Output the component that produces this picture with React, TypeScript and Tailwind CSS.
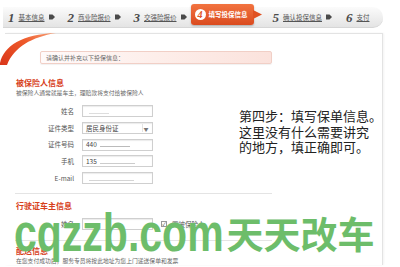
import React from "react";

const steps = [
  { n: "1", label: "基本信息" },
  { n: "2", label: "商业险报价" },
  { n: "3", label: "交强险报价" },
];

function StepArrow() {
  return (
    <svg width="6" height="6" viewBox="0 0 6 6" className="shrink-0">
      <path d="M0 0.5h3.5L6 3 3.5 5.5H0z" fill="#4a4a4a" />
    </svg>
  );
}

function Step({ n, label, arrow = true }: { n: string; label: string; arrow?: boolean }) {
  return (
    <div className="flex items-center">
      <span className="font-['Liberation_Serif',serif] text-[13px] font-bold italic leading-none text-[#4b4b4b]">
        {n}
      </span>
      <span className="ml-[4px] text-[6.5px] leading-none text-[#555] underline">{label}</span>
      {arrow ? (
        <span className="ml-[4px]">
          <StepArrow />
        </span>
      ) : null}
    </div>
  );
}

function Field({ label, value, smudge, select }: { label: string; value?: string; smudge?: string; select?: boolean }) {
  return (
    <div className="flex h-[16.7px] items-center">
      <span className="w-[70px] pr-px text-right text-[6.5px] leading-none text-[#555]">{label}</span>
      <div className="ml-[7px] flex h-[12px] w-[71px] items-center border border-[#cfcfcf] bg-white px-[3px] shadow-[inset_0_1px_1px_rgba(0,0,0,0.08)]">
        {value ? <span className="text-[6.5px] leading-none text-[#444]">{value}</span> : null}
        {smudge ? <span className={`ml-[3px] mt-[4px] h-px bg-[#bbb] ${smudge}`} /> : null}
        {select ? (
          <span className="ml-auto flex h-[8px] w-[7px] items-center justify-center border-l border-[#e3e3e3] text-[5px] leading-none text-[#777]">
            ▼
          </span>
        ) : null}
      </div>
    </div>
  );
}

export default function App() {
  return (
    <div className="relative h-[267px] w-[400px] overflow-hidden bg-white font-['Noto_Sans_CJK_SC','Noto_Sans',sans-serif]">
      {/* step bar */}
      <div className="pt-[7px] pl-[3px]">
        <div className="flex h-[21px] w-[380px] items-center rounded-r-[10px] border-b border-[#d6d6d6] bg-gradient-to-b from-[#fbfbfb] to-[#e4e4e4] pl-[5px]">
          <div className="flex items-center gap-[13px]">
            {steps.map((s) => (
              <Step key={s.n} n={s.n} label={s.label} />
            ))}
          </div>
          <div className="ml-[4px] -mt-[3px] flex items-center self-start">
            <div className="flex h-[21px] w-[63px] items-center rounded-[3px] bg-gradient-to-b from-[#f2733f] to-[#da4a1e] pl-[4px] shadow-[0_1px_2px_rgba(0,0,0,0.25)]">
              <span className="flex h-[11px] w-[11px] items-center justify-center rounded-full bg-white font-['Liberation_Serif',serif] text-[10px] font-bold italic leading-none text-[#e2562a]">
                4
              </span>
              <span className="ml-[3px] text-[6.5px] font-bold leading-none text-white">填写投保信息</span>
            </div>
            <svg width="9" height="21" viewBox="0 0 9 21" className="-ml-px">
              <path d="M0 6L9 10.5 0 15z" fill="#e05122" />
            </svg>
          </div>
          <div className="ml-[11px] flex items-center gap-[14px]">
            <Step n="5" label="确认投保信息" />
            <Step n="6" label="支付" arrow={false} />
          </div>
        </div>
      </div>

      {/* swoosh */}
      <svg className="absolute left-0 top-[31px]" width="60" height="34" viewBox="0 0 60 34">
        <defs>
          <linearGradient id="sw" x1="0" y1="1" x2="1" y2="0">
            <stop offset="0" stopColor="#d9361a" />
            <stop offset="0.6" stopColor="#ee5a2a" />
            <stop offset="1" stopColor="#f7a077" />
          </linearGradient>
        </defs>
        <path d="M0 32C4 15 22 3 56 2 32 6 14 16 7 34H0z" fill="url(#sw)" />
      </svg>

      {/* panel */}
      <div className="ml-[5px] mt-[5px] w-[378px] border-t border-r border-[#e3e3e3] shadow-[1px_0_2px_rgba(0,0,0,0.05)]">
        <div className="ml-[35px] mt-[17px] flex h-[13px] w-[232px] items-center rounded-[2px] border border-[#f1cfc6] bg-gradient-to-r from-[#fffafa] via-[#fdeeea] to-[#fbe2dc] pl-[5px] shadow-[0_1px_1px_rgba(0,0,0,0.06)]">
          <span className="text-[6px] leading-none text-[#666]">请确认并补充以下投保信息：</span>
        </div>

        <div className="pl-[11px] mt-[14px] text-[8px] font-bold leading-[10px] text-[#d7411c]">被保险人信息</div>
        <div className="pl-[11px] mt-px text-[5.8px] leading-[8px] text-[#666]">
          被保险人通常就是车主，理赔款将支付给被保险人
        </div>

        <div className="mt-[6px] flex flex-col">
          <Field label="姓名" smudge="w-[20px] bg-[#ddd]" />
          <Field label="证件类型" value="居民身份证" select />
          <Field label="证件号码" value="440" smudge="w-[30px]" />
          <Field label="手机" value="135" smudge="w-[35px] bg-[#ccc]" />
          <Field label="E-mail" smudge="w-[45px] bg-[#d5d5d5]" />
        </div>

        <div className="ml-[10px] mt-[7px] w-[257px] border-t border-[#e4e4e4]" />

        <div className="pl-[11px] mt-[7px] text-[8px] font-bold leading-[10px] text-[#d7411c]">行驶证车主信息</div>
        <div className="mt-[4px] flex items-center">
          <Field label="姓名" />
          <span className="ml-[8px] flex h-[6px] w-[6px] items-center justify-center border border-[#999] bg-white text-[5px] leading-none text-[#333]">
            ✓
          </span>
          <span className="ml-[5px] text-[6.5px] leading-none text-[#555]">同被保险人</span>
        </div>

        <div className="ml-[10px] mt-[8px] w-[257px] border-t border-[#e4e4e4]" />

        <div className="pl-[11px] mt-[5px] text-[8px] font-bold leading-[10px] text-[#d7411c]">配送信息</div>
        <div className="pl-[11px] mt-px text-[5.8px] leading-[8px] text-[#666]">
          在您支付成功后，服务专员将按此地址为您上门递送保单和发票
        </div>
      </div>

      {/* annotation */}
      <div className="absolute left-[239px] top-[108px] w-[150px] text-[13px] leading-[15.5px] text-[#222]">
        第四步：填写保单信息。
        <br />
        这里没有什么需要讲究
        <br />
        的地方，填正确即可。
      </div>

      {/* watermark */}
      <div className="absolute left-[14px] top-[200px] flex h-[60px] items-end whitespace-nowrap text-[#6dbd6a]">
        <span className="inline-block origin-bottom scale-y-[1.3] font-['Liberation_Sans',sans-serif] text-[41px] font-bold leading-[41px]">
          cqzzb.com
        </span>
        <span className="ml-[3px] text-[37px] font-bold leading-[54px]">天天改车</span>
      </div>
    </div>
  );
}
